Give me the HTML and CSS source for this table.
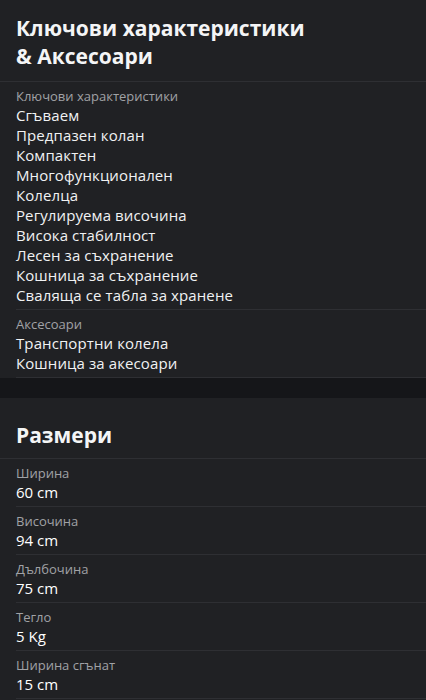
FILE: index.html
```html
<!DOCTYPE html>
<html lang="bg">
<head>
<meta charset="utf-8">
<title>Характеристики</title>
<link rel="stylesheet" href="styles.css">
</head>
<body>
<section class="card">
  <h2 class="card-title first">Ключови характеристики<br>&amp; Аксесоари</h2>
  <div class="group">
    <div class="group-label">Ключови характеристики</div>
    <ul class="list">
      <li>Сгъваем</li>
      <li>Предпазен колан</li>
      <li>Компактен</li>
      <li>Многофункционален</li>
      <li>Колелца</li>
      <li>Регулируема височина</li>
      <li>Висока стабилност</li>
      <li>Лесен за съхранение</li>
      <li>Кошница за съхранение</li>
      <li>Сваляща се табла за хранене</li>
    </ul>
  </div>
  <div class="group">
    <div class="group-label">Аксесоари</div>
    <ul class="list">
      <li>Транспортни колела</li>
      <li>Кошница за акесоари</li>
    </ul>
  </div>
</section>
<div class="gap"></div>
<section class="card">
  <h2 class="card-title second">Размери</h2>
  <div class="row"><div class="group-label">Ширина</div><div class="value">60 cm</div></div>
  <div class="row"><div class="group-label">Височина</div><div class="value">94 cm</div></div>
  <div class="row"><div class="group-label">Дълбочина</div><div class="value">75 cm</div></div>
  <div class="row"><div class="group-label">Тегло</div><div class="value">5 Kg</div></div>
  <div class="row"><div class="group-label">Ширина сгънат</div><div class="value">15 cm</div></div>
</section>
</body>
</html>
```
FILE: styles.css
```css
html, body {
  margin: 0;
  padding: 0;
  background: #202124;
  color: #f1f2f3;
  font-family: "Open Sans", "Noto Sans", sans-serif;
}
.card {
  background: #202124;
}
.card-title {
  margin: 0;
  font-size: 21px;
  line-height: 28px;
  font-weight: 700;
  color: #f4f5f6;
  border-bottom: 1px solid #2e2f33;
}
.card-title.first {
  padding: 14px 16px 11px;
}
.card-title.second {
  padding: 23px 16px 9px;
}
.group {
  margin-left: 16px;
  padding: 5px 0 4px;
  border-bottom: 1px solid #2e2f33;
}
.group-label {
  font-size: 13px;
  line-height: 18px;
  color: #a0a2a6;
}
.list {
  list-style: none;
  margin: 0;
  padding: 0;
}
.list li {
  font-size: 15px;
  line-height: 20px;
  letter-spacing: 0.1px;
  color: #f1f2f3;
}
.gap {
  height: 20px;
  background: #151619;
}
.row {
  margin-left: 16px;
  padding: 5px 0 4px;
  border-bottom: 1px solid #2e2f33;
}
.value {
  font-size: 15px;
  line-height: 20px;
  font-weight: 500;
  color: #ffffff;
}
```
